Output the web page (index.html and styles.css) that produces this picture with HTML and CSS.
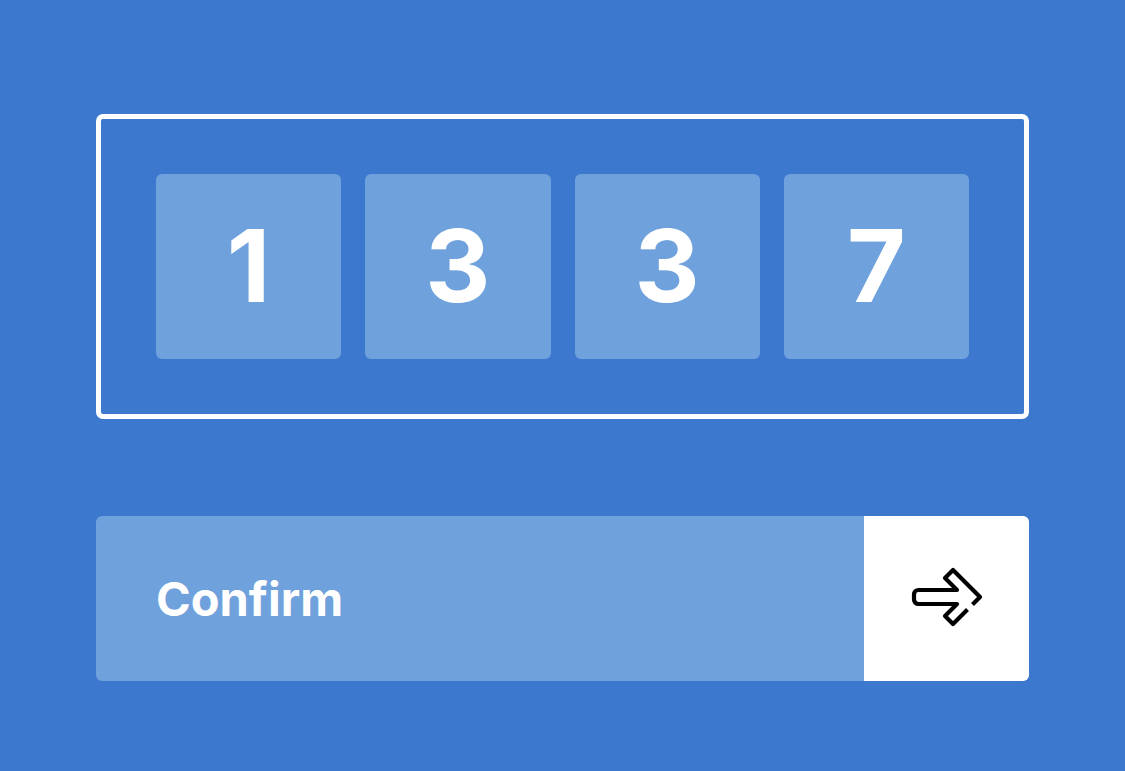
FILE: index.html
```html
<!DOCTYPE html>
<html>
<head>
<meta charset="utf-8">
<link rel="stylesheet" href="styles.css">
</head>
<body>
<main class="page">
  <section class="code-frame">
    <div class="digit">1</div>
    <div class="digit">3</div>
    <div class="digit">3</div>
    <div class="digit">7</div>
  </section>
  <button class="confirm">
    <span class="confirm-label">Confirm</span>
    <span class="confirm-icon">
      <svg width="165" height="165" viewBox="864 516 165 165" fill="none" stroke="#000" stroke-width="4.2" stroke-linejoin="round" stroke-linecap="butt">
        <path d="M967.5 609.5 L953 624 L945 616 L957 604 H918.5 A4.5 4.5 0 0 1 914 599.5 V594.5 A4.5 4.5 0 0 1 918.5 590 H957 L945 578 L953 570 L980 597 L972.5 604.5"/>
      </svg>
    </span>
  </button>
</main>
</body>
</html>
```
FILE: styles.css
```css
html, body {
  margin: 0;
  padding: 0;
  background: #3b78ce;
  width: 1125px;
  height: 771px;
  overflow: hidden;
}

.page {
  padding: 114px 0 0 96px;
  display: flex;
  flex-direction: column;
  gap: 97px;
  font-family: Inter, "Liberation Sans", Arial, sans-serif;
}

.code-frame {
  box-sizing: border-box;
  width: 933px;
  height: 305px;
  border: 5px solid #ffffff;
  border-radius: 7px;
  padding: 55px;
  display: flex;
  gap: 24px;
}

.digit {
  flex: 1;
  background: #6fa1dc;
  border-radius: 6px;
  display: flex;
  align-items: center;
  justify-content: center;
  color: #ffffff;
  font-weight: bold;
  font-size: 101px;
  line-height: 1;
  padding-bottom: 2px;
}

.confirm {
  box-sizing: border-box;
  width: 933px;
  height: 165px;
  border: none;
  padding: 0;
  margin: 0;
  border-radius: 6px;
  overflow: hidden;
  display: flex;
  background: #6fa1dc;
  font-family: inherit;
  cursor: pointer;
}

.confirm-label {
  flex: 1;
  display: flex;
  align-items: center;
  padding-left: 60px;
  color: #ffffff;
  font-weight: bold;
  font-size: 47px;
  text-align: left;
}

.confirm-icon {
  width: 165px;
  height: 165px;
  background: #ffffff;
  display: block;
}

.confirm-icon svg {
  display: block;
}
```
